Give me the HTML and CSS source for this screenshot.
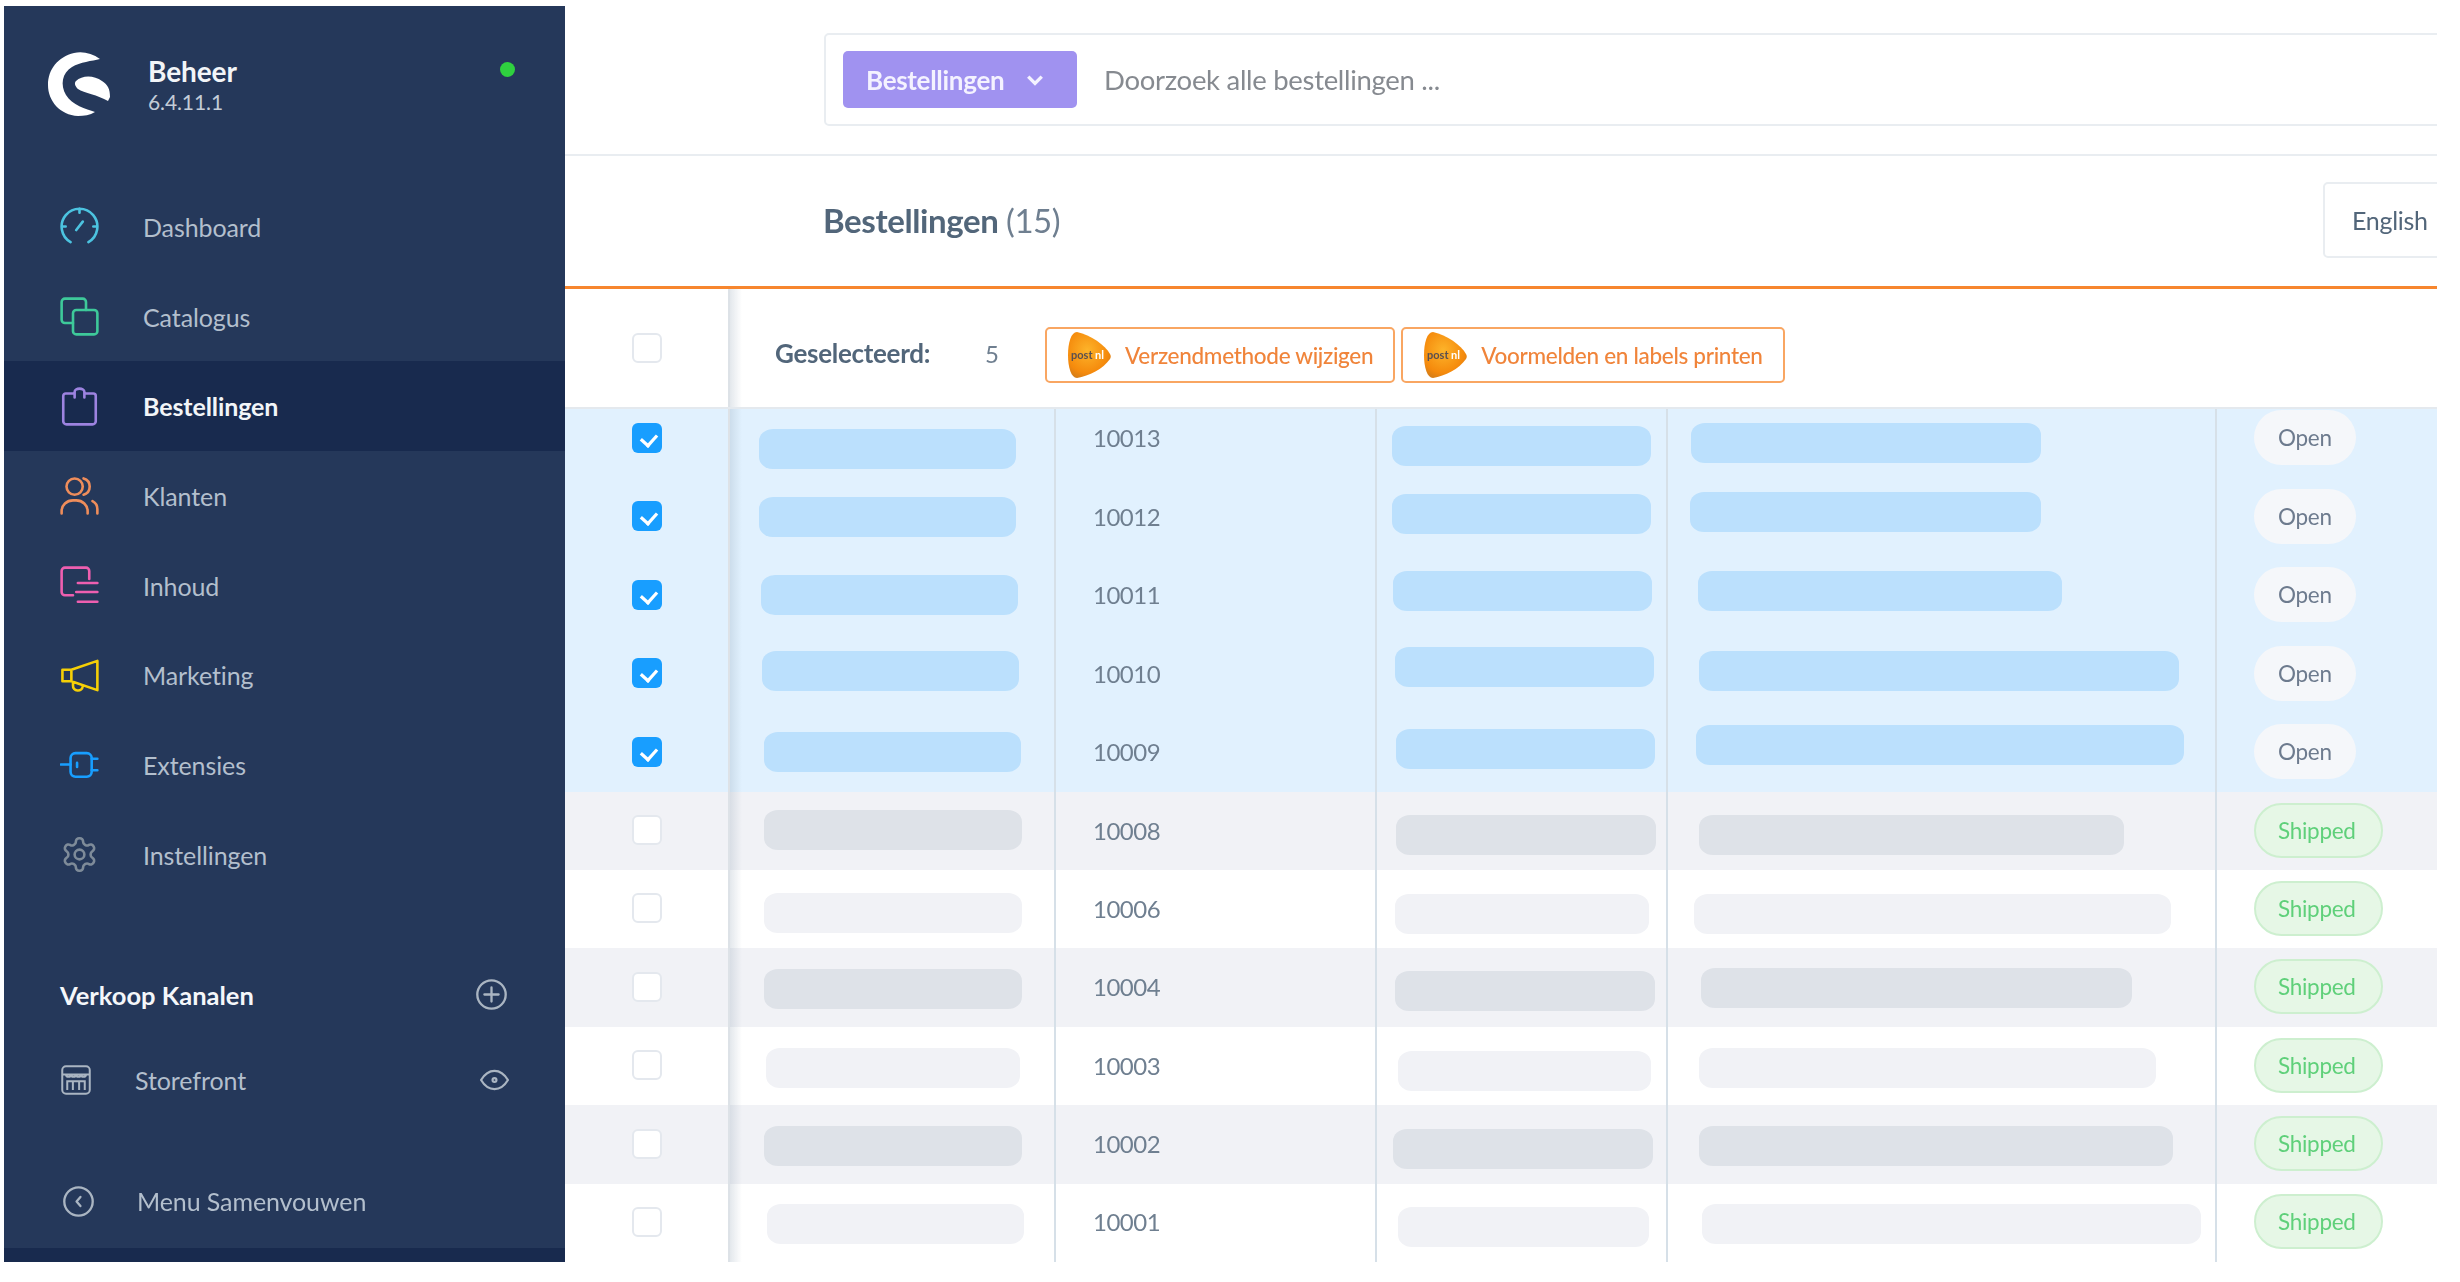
FILE: index.html
```html
<!DOCTYPE html>
<html lang="nl">
<head>
    <meta charset="UTF-8">
    <title>Bestellingen</title>
    <link rel="stylesheet" href="styles.css">
</head>
<body>
<div class="app">
    <aside class="sidebar">
        <div class="brand">
            <svg class="logo" viewBox="0 0 64 66">
                <path d="M52 8C44 2 34 0 26 2 10 6 0 18 0 34c0 16 12 30 30 31 6 0 12-1 17-4-9-3-23-7-29-17-6-10-4-22 6-28 8-5 20-6 28-8z"/>
                <path d="M28 30c6-6 18-6 26 0 6 4 8 8 8 16l-2 4c-10-6-24-8-30-12-3-3-4-6-2-8z"/>
            </svg>
            <div class="brand-text">
                <div class="brand-name">Beheer</div>
                <div class="brand-version">6.4.11.1</div>
            </div>
            <span class="status-dot"></span>
        </div>

        <nav class="nav">
            <a class="nav-item">
                <svg class="nav-icon ic-cyan" viewBox="0 0 24 24"><path d="M6.5 21.6A11 11 0 1 1 17.5 21.6M12 1v2.5M1 12h2.5M20.500 12H23M10 14.200 14 9"/></svg>
                Dashboard
            </a>
            <a class="nav-item">
                <svg class="nav-icon ic-green" viewBox="0 0 24 24"><rect x="8" y="8" width="15" height="15" rx="2"/><path d="M8 16H3a2 2 0 0 1-2-2V3a2 2 0 0 1 2-2h11a2 2 0 0 1 2 2v5"/></svg>
                Catalogus
            </a>
            <a class="nav-item active">
                <svg class="nav-icon ic-purple" viewBox="0 0 24 24"><path d="M8 4H3.5A1.5 1.5 0 0 0 2 5.5V21a2 2 0 0 0 2 2h16a2 2 0 0 0 2-2V5.500A1.500 1.500 0 0 0 20.500 4H16M9 6.500V3a3 2 0 0 1 6 0v3.500"/></svg>
                Bestellingen
            </a>
            <a class="nav-item">
                <svg class="nav-icon ic-orange" viewBox="0 0 24 24"><circle cx="9" cy="6.500" r="5"/><path d="M1 23v-1.500a7 6.500 0 0 1 7-6.500h2a7 6.500 0 0 1 7 6.500V23M14.500 1.500a5.200 5.200 0 0 1 0 10M20 15.500c2 1 3 3 3 5V23"/></svg>
                Klanten
            </a>
            <a class="nav-item">
                <svg class="nav-icon ic-pink" viewBox="0 0 24 24"><path d="M18 8V3a2 2 0 0 0-2-2H3a2 2 0 0 0-2 2v13a2 2 0 0 0 2 2h5M11 10.500h12M10 16h13M11 22h12"/></svg>
                Inhoud
            </a>
            <a class="nav-item">
                <svg class="nav-icon ic-yellow" viewBox="0 0 24 24"><path d="M1.500 8.500H7L23 3v18L7 15.500H1.500zM7 8.500v7M8 16v2a3 3 0 0 0 6 .5"/></svg>
                Marketing
            </a>
            <a class="nav-item">
                <svg class="nav-icon ic-blue" viewBox="0 0 24 24"><rect x="6.500" y="5" width="13" height="14.500" rx="3"/><path d="M.5 12H6.500M19.500 8.500H23M19.500 15.500H23M10.500 11v2.500"/></svg>
                Extensies
            </a>
            <a class="nav-item">
                <svg class="nav-icon ic-grey" viewBox="0 0 24 24"><path d="M12.220 2h-.44a2 2 0 0 0-2 2v.18a2 2 0 0 1-1 1.730l-.43.25a2 2 0 0 1-2 0l-.15-.08a2 2 0 0 0-2.730.73l-.22.38a2 2 0 0 0 .73 2.730l.15.1a2 2 0 0 1 1 1.720v.51a2 2 0 0 1-1 1.740l-.15.09a2 2 0 0 0-.73 2.730l.22.38a2 2 0 0 0 2.730.73l.15-.08a2 2 0 0 1 2 0l.43.25a2 2 0 0 1 1 1.730V20a2 2 0 0 0 2 2h.44a2 2 0 0 0 2-2v-.18a2 2 0 0 1 1-1.730l.43-.25a2 2 0 0 1 2 0l.15.08a2 2 0 0 0 2.730-.73l.22-.39a2 2 0 0 0-.73-2.730l-.15-.08a2 2 0 0 1-1-1.740v-.5a2 2 0 0 1 1-1.740l.15-.09a2 2 0 0 0 .73-2.730l-.22-.38a2 2 0 0 0-2.730-.73l-.15.08a2 2 0 0 1-2 0l-.43-.25a2 2 0 0 1-1-1.730V4a2 2 0 0 0-2-2z"/><circle cx="12" cy="12" r="3"/></svg>
                Instellingen
            </a>
        </nav>

        <div class="channels-head">
            <span>Verkoop Kanalen</span>
            <svg class="small-icon" viewBox="0 0 24 24"><circle cx="12" cy="12" r="11"/><path d="M12 6.500v11M6.500 12h11"/></svg>
        </div>
        <div class="channel">
            <svg class="store-icon" viewBox="0 0 24 24"><rect x="1" y="1" width="22" height="22" rx="3"/><path d="M1 7.500h22M4 7.500c0 2.500 4 2.500 4 0 0 2.500 4 2.500 4 0 0 2.500 4 2.500 4 0 0 2.500 4 2.500 4 0M5 20v-7h14v7M9.500 13v7M14.500 13v7"/></svg>
            <span class="channel-name">Storefront</span>
            <svg class="small-icon eye" viewBox="0 0 24 18"><path d="M1 9c3-5 7-7.500 11-7.500S20 4 23 9c-3 5-7 7.500-11 7.500S4 14 1 9z"/><circle cx="12" cy="9" r="1.600"/></svg>
        </div>

        <div class="collapse">
            <svg class="small-icon" viewBox="0 0 24 24"><circle cx="12" cy="12" r="11"/><path d="M13.500 8.500 10.500 12l3 3.500"/></svg>
            <span>Menu Samenvouwen</span>
        </div>
        <div class="sidebar-foot"></div>
    </aside>

    <main class="main">
        <div class="topbar">
            <div class="search">
                <button class="search-type">Bestellingen
                    <svg class="chevron" viewBox="0 0 16 10"><path d="M2 2l6 6 6-6"/></svg>
                </button>
                <span class="search-placeholder">Doorzoek alle bestellingen ...</span>
            </div>
        </div>

        <div class="titlebar">
            <h1>Bestellingen <span class="count">(15)</span></h1>
            <div class="lang">English</div>
        </div>

        <div class="toolbar">
            <div class="toolbar-check"><span class="check"></span></div>
            <div class="toolbar-main">
                <span class="selected-label">Geselecteerd:</span>
                <span class="selected-count">5</span>
                <button class="postnl-btn">
                    <svg class="postnl" viewBox="0 0 44 48"><defs><radialGradient id="pn" cx="45%" cy="40%" r="70%"><stop offset="0" stop-color="#fdb42a"/><stop offset=".7" stop-color="#f58a0c"/><stop offset="1" stop-color="#c9781c"/></radialGradient></defs><path d="M10 1C24 4 38 14 43 23c1 2 1 3 0 5C36 38 22 45 10 47 4 47 1 36 1 24S4 1 10 1z" fill="url(#pn)"/><text x="4" y="28" class="pn-post">post</text><text x="28" y="28" class="pn-nl">nl</text></svg>
                    Verzendmethode wijzigen
                </button>
                <button class="postnl-btn">
                    <svg class="postnl" viewBox="0 0 44 48"><path d="M10 1C24 4 38 14 43 23c1 2 1 3 0 5C36 38 22 45 10 47 4 47 1 36 1 24S4 1 10 1z" fill="url(#pn)"/><text x="4" y="28" class="pn-post">post</text><text x="28" y="28" class="pn-nl">nl</text></svg>
                    Voormelden en labels printen
                </button>
            </div>
        </div>

        <div class="rows">
            <div class="row row-first selected">
                <div class="cell-check"><span class="check checked"></span></div>
                <div class="cell-name"><span class="blob" style="--x:31px;--y:11px;--w:257px"></span></div>
                <div class="cell-num">10013</div>
                <div class="cell"><span class="blob" style="--x:17px;--y:8px;--w:259px"></span></div>
                <div class="cell"><span class="blob" style="--x:25px;--y:5px;--w:350px"></span></div>
                <div class="cell-status"><span class="pill">Open</span></div>
            </div>
            <div class="row selected">
                <div class="cell-check"><span class="check checked"></span></div>
                <div class="cell-name"><span class="blob" style="--x:31px;--y:1px;--w:257px"></span></div>
                <div class="cell-num">10012</div>
                <div class="cell"><span class="blob" style="--x:17px;--y:-2px;--w:259px"></span></div>
                <div class="cell"><span class="blob" style="--x:24px;--y:-4px;--w:351px"></span></div>
                <div class="cell-status"><span class="pill">Open</span></div>
            </div>
            <div class="row selected">
                <div class="cell-check"><span class="check checked"></span></div>
                <div class="cell-name"><span class="blob" style="--x:33px;--y:0px;--w:257px"></span></div>
                <div class="cell-num">10011</div>
                <div class="cell"><span class="blob" style="--x:18px;--y:-4px;--w:259px"></span></div>
                <div class="cell"><span class="blob" style="--x:32px;--y:-4px;--w:364px"></span></div>
                <div class="cell-status"><span class="pill">Open</span></div>
            </div>
            <div class="row selected">
                <div class="cell-check"><span class="check checked"></span></div>
                <div class="cell-name"><span class="blob" style="--x:34px;--y:-2px;--w:257px"></span></div>
                <div class="cell-num">10010</div>
                <div class="cell"><span class="blob" style="--x:20px;--y:-6px;--w:259px"></span></div>
                <div class="cell"><span class="blob" style="--x:33px;--y:-2px;--w:480px"></span></div>
                <div class="cell-status"><span class="pill">Open</span></div>
            </div>
            <div class="row selected">
                <div class="cell-check"><span class="check checked"></span></div>
                <div class="cell-name"><span class="blob" style="--x:36px;--y:0px;--w:257px"></span></div>
                <div class="cell-num">10009</div>
                <div class="cell"><span class="blob" style="--x:21px;--y:-3px;--w:259px"></span></div>
                <div class="cell"><span class="blob" style="--x:30px;--y:-7px;--w:488px"></span></div>
                <div class="cell-status"><span class="pill">Open</span></div>
            </div>
            <div class="row striped">
                <div class="cell-check"><span class="check"></span></div>
                <div class="cell-name"><span class="blob" style="--x:36px;--y:0px;--w:258px"></span></div>
                <div class="cell-num">10008</div>
                <div class="cell"><span class="blob" style="--x:21px;--y:5px;--w:260px"></span></div>
                <div class="cell"><span class="blob" style="--x:33px;--y:5px;--w:425px"></span></div>
                <div class="cell-status"><span class="pill shipped">Shipped</span></div>
            </div>
            <div class="row">
                <div class="cell-check"><span class="check"></span></div>
                <div class="cell-name"><span class="blob" style="--x:36px;--y:5px;--w:258px"></span></div>
                <div class="cell-num">10006</div>
                <div class="cell"><span class="blob" style="--x:20px;--y:6px;--w:254px"></span></div>
                <div class="cell"><span class="blob" style="--x:28px;--y:6px;--w:477px"></span></div>
                <div class="cell-status"><span class="pill shipped">Shipped</span></div>
            </div>
            <div class="row striped">
                <div class="cell-check"><span class="check"></span></div>
                <div class="cell-name"><span class="blob" style="--x:36px;--y:2px;--w:258px"></span></div>
                <div class="cell-num">10004</div>
                <div class="cell"><span class="blob" style="--x:20px;--y:4px;--w:260px"></span></div>
                <div class="cell"><span class="blob" style="--x:35px;--y:1px;--w:431px"></span></div>
                <div class="cell-status"><span class="pill shipped">Shipped</span></div>
            </div>
            <div class="row">
                <div class="cell-check"><span class="check"></span></div>
                <div class="cell-name"><span class="blob" style="--x:38px;--y:3px;--w:254px"></span></div>
                <div class="cell-num">10003</div>
                <div class="cell"><span class="blob" style="--x:23px;--y:6px;--w:253px"></span></div>
                <div class="cell"><span class="blob" style="--x:33px;--y:3px;--w:457px"></span></div>
                <div class="cell-status"><span class="pill shipped">Shipped</span></div>
            </div>
            <div class="row striped">
                <div class="cell-check"><span class="check"></span></div>
                <div class="cell-name"><span class="blob" style="--x:36px;--y:2px;--w:258px"></span></div>
                <div class="cell-num">10002</div>
                <div class="cell"><span class="blob" style="--x:18px;--y:5px;--w:260px"></span></div>
                <div class="cell"><span class="blob" style="--x:33px;--y:2px;--w:474px"></span></div>
                <div class="cell-status"><span class="pill shipped">Shipped</span></div>
            </div>
            <div class="row">
                <div class="cell-check"><span class="check"></span></div>
                <div class="cell-name"><span class="blob" style="--x:39px;--y:2px;--w:257px"></span></div>
                <div class="cell-num">10001</div>
                <div class="cell"><span class="blob" style="--x:23px;--y:5px;--w:251px"></span></div>
                <div class="cell"><span class="blob" style="--x:36px;--y:2px;--w:499px"></span></div>
                <div class="cell-status"><span class="pill shipped">Shipped</span></div>
            </div>
        </div>
    </main>
</div>
</body>
</html>
```

FILE: styles.css
```css
:root {
    --navy: #25385a;
    --navy-dark: #182a4e;
    --text: #52667a;
    --muted: #6f7f90;
    --line: #e9edf1;
    --orange: #f7862e;
}

* {
    box-sizing: border-box;
}

body {
    margin: 0;
    background: #fff;
    color: var(--text);
    font-family: Lato, "Noto Sans", sans-serif;
    font-size: 24px;
    letter-spacing: -0.3px;
}

/* the source picture is a soft upscale */
.app {
    display: flex;
    height: 1282px;
    padding: 6px 23px 20px 4px;
    filter: blur(0.6px);
}

/* sidebar */
.sidebar {
    width: 561px;
    flex-shrink: 0;
    display: flex;
    flex-direction: column;
    background: var(--navy);
    color: #b3bfcd;
    font-size: 25px;
    letter-spacing: -0.1px;
}

.brand {
    height: 176px;
    display: flex;
    align-items: flex-start;
    padding: 45px 0 0 44px;
}

.logo {
    width: 64px;
    height: 66px;
    fill: #fff;
}

.brand-text {
    margin: 3px 0 0 36px;
}

.brand-name {
    color: #f2f5f8;
    font-size: 28px;
    font-weight: 700;
    line-height: 35px;
}

.brand-version {
    color: #c3ccd7;
    font-size: 21px;
    line-height: 26px;
}

.status-dot {
    width: 15px;
    height: 15px;
    margin: 11px 50px 0 auto;
    border-radius: 50%;
    background: #2fd13f;
}

.nav-item {
    height: 89.7px;
    display: flex;
    align-items: center;
    gap: 44px;
    padding-left: 56px;
}

.nav-item.active {
    background: var(--navy-dark);
    color: #f2f5f8;
    font-weight: 700;
}

.nav-icon {
    width: 39px;
    height: 39px;
    fill: none;
    stroke-width: 1.6;
    stroke-linecap: round;
    stroke-linejoin: round;
    flex-shrink: 0;
}

.ic-cyan { stroke: #4cc3e0; }
.ic-green { stroke: #3ec99a; }
.ic-purple { stroke: #9d83e0; }
.ic-orange { stroke: #ef8d5b; }
.ic-pink { stroke: #ee5fb0; }
.ic-yellow { stroke: #f5cf06; }
.ic-blue { stroke: #189eff; }
.ic-grey { stroke: #7e8b99; }

.channels-head {
    height: 50px;
    margin-top: 70px;
    padding: 0 58px 0 56px;
    display: flex;
    align-items: center;
    justify-content: space-between;
    color: #f5f7fa;
    font-size: 25.5px;
    font-weight: 700;
    letter-spacing: 0;
}

.small-icon {
    width: 31px;
    height: 31px;
    fill: none;
    stroke: #aab5c2;
    stroke-width: 1.8;
    stroke-linecap: round;
    stroke-linejoin: round;
    flex-shrink: 0;
}

.channel {
    height: 60px;
    margin-top: 30px;
    padding: 0 55px 0 57px;
    display: flex;
    align-items: center;
}

.store-icon {
    width: 30px;
    height: 32px;
    fill: none;
    stroke: #aab5c2;
    stroke-width: 1.6;
    flex-shrink: 0;
}

.channel-name {
    margin-left: 44px;
}

.eye {
    height: 22px;
    margin-left: auto;
}

.collapse {
    margin-top: auto;
    height: 87px;
    padding: 0 0 7px 59px;
    display: flex;
    align-items: center;
    gap: 43px;
}

.sidebar-foot {
    height: 14px;
    background: var(--navy-dark);
}

/* main area */
.main {
    width: 1872px;
    flex-shrink: 0;
    overflow: hidden;
}

.topbar {
    height: 150px;
    padding: 27px 0 0 259px;
    border-bottom: 2px solid var(--line);
}

.search {
    height: 93px;
    margin-right: -20px;
    padding-left: 17px;
    display: flex;
    align-items: center;
    gap: 27px;
    border: 2px solid var(--line);
    border-radius: 5px;
}

.search-type {
    width: 234px;
    height: 57px;
    padding: 0 0 0 23px;
    display: flex;
    align-items: center;
    gap: 22px;
    border: none;
    border-radius: 5px;
    background: #a092f0;
    color: #f4f2ff;
    font: inherit;
    font-size: 26px;
    font-weight: 700;
    letter-spacing: inherit;
}

.chevron {
    width: 18px;
    height: 12px;
    fill: none;
    stroke: #f4f2ff;
    stroke-width: 3;
}

.search-placeholder {
    color: #868a90;
    font-size: 27.5px;
}

.titlebar {
    height: 133px;
    padding: 0 0 2px 258px;
    display: flex;
    align-items: center;
    justify-content: space-between;
    border-bottom: 3px solid var(--orange);
}

.titlebar h1 {
    margin: 0;
    font-size: 33px;
    font-weight: 700;
    letter-spacing: -0.4px;
}

.count {
    font-weight: 400;
    color: var(--muted);
}

.lang {
    width: 130px;
    height: 76px;
    margin-right: -16px;
    padding-left: 27px;
    display: flex;
    align-items: center;
    border: 2px solid var(--line);
    border-radius: 5px;
    font-size: 25px;
}

.toolbar {
    height: 120px;
    display: grid;
    grid-template-columns: 163px 1fr;
    border-bottom: 2px solid #e4e9ee;
}

.toolbar-check {
    display: flex;
    align-items: center;
    justify-content: center;
}

.toolbar-main {
    display: flex;
    align-items: center;
    padding: 10px 0 0 45px;
    border-left: 2px solid #dde2e7;
    background: linear-gradient(to right, rgba(130, 150, 170, .22), transparent 12px);
}

.selected-label {
    width: 210px;
    font-size: 26px;
    font-weight: 700;
}

.selected-count {
    width: 60px;
    color: var(--muted);
}

.postnl-btn {
    height: 56px;
    margin: 4px 6px 0 0;
    padding: 0 20px;
    display: flex;
    align-items: center;
    gap: 14px;
    border: 2px solid #f9a662;
    border-radius: 5px;
    background: #fff;
    color: #f0843a;
    font: inherit;
    font-size: 22.5px;
    font-weight: 500;
    letter-spacing: inherit;
}

.postnl {
    width: 44px;
    height: 48px;
}

.pn-post {
    font-size: 11px;
    font-weight: 700;
    fill: #5a5050;
    letter-spacing: 0;
}

.pn-nl {
    font-size: 11px;
    font-weight: 700;
    fill: #fff;
    letter-spacing: 0;
}

/* table rows */
.row {
    height: 78.4px;
    display: grid;
    grid-template-columns: 163px 326px 321px 291px 549px 222px;
}

.row > div {
    display: flex;
    align-items: center;
    padding-bottom: 1.5px;
}

.row-first {
    height: 69px;
}

.row-first > div {
    padding-bottom: 12px;
}

.selected {
    background: #e1f1fe;
}

.striped {
    background: #f1f2f6;
}

.cell-check {
    justify-content: center;
}

.cell-name {
    border-left: 2px solid #dde2e7;
    background: linear-gradient(to right, rgba(130, 150, 170, .22), transparent 12px);
}

.cell-num {
    padding-left: 37px;
    border-left: 2px solid #d6e0e8;
    color: var(--muted);
    letter-spacing: -0.5px;
}

.cell,
.cell-status {
    border-left: 2px solid #d6e0e8;
}

.cell-status {
    padding-left: 37px;
}

.check {
    width: 30px;
    height: 30px;
    display: block;
    position: relative;
    border: 2px solid #e4e8ee;
    border-radius: 6px;
    background: #fff;
}

.check.checked {
    border: none;
    background: #189eff;
}

/* tick */
.check.checked::after {
    content: "";
    position: absolute;
    left: 10px;
    top: 6px;
    width: 10px;
    height: 15px;
    border: solid #fff;
    border-width: 0 4px 4px 0;
    transform: rotate(42deg) scale(.8);
}

/* smeared-out customer data */
.blob {
    width: var(--w);
    height: 40px;
    margin-left: calc(var(--x) - 2px);
    transform: translateY(var(--y));
    flex-shrink: 0;
    border-radius: 14px / 12px;
    background: #f1f2f6;
}

.selected .blob {
    background: #bbe0fd;
}

.striped .blob {
    background: #dee2e8;
}

.pill {
    width: 102px;
    height: 55px;
    padding-left: 24px;
    display: flex;
    align-items: center;
    border-radius: 28px;
    background: #f5f7fa;
    color: #6d7b8e;
    font-size: 22.5px;
}

.pill.shipped {
    width: 129px;
    padding-left: 22px;
    border: 2px solid #cdefcf;
    background: #e6f7e6;
    color: #5fd07a;
}
```
